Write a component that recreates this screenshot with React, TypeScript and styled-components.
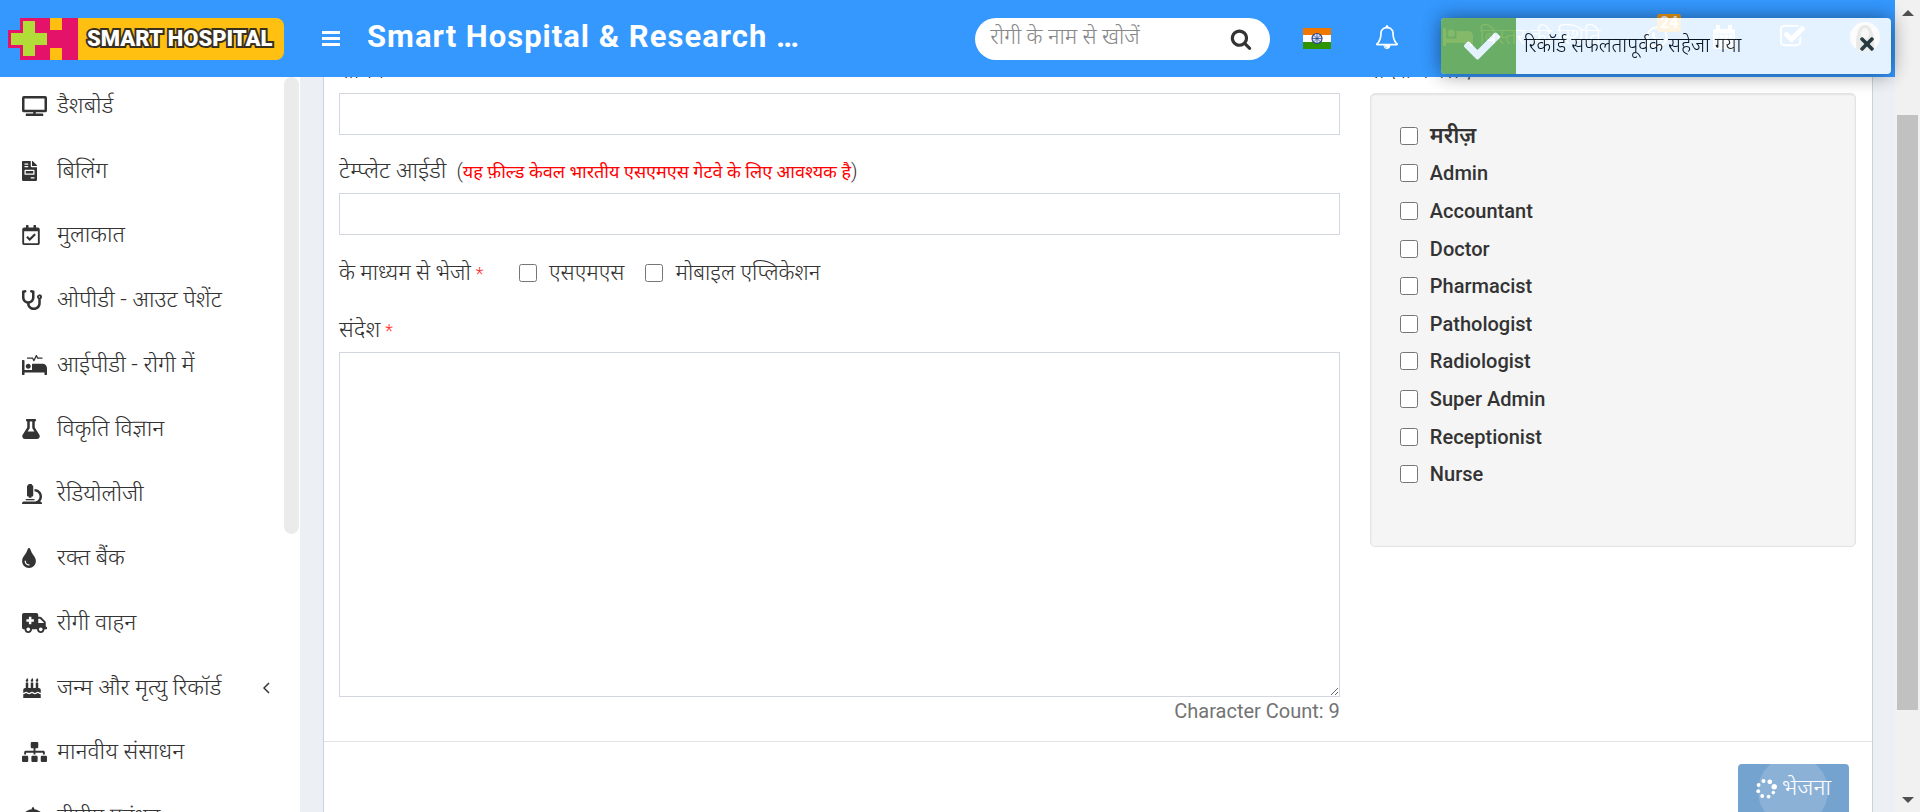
import React from "react";
import styled, { createGlobalStyle } from "styled-components";
import {
  FaTv, FaFileInvoice, FaRegCalendarCheck, FaStethoscope, FaProcedures, FaFlask, FaMicroscope,
  FaTint, FaAmbulance, FaBirthdayCake, FaSitemap, FaUmbrella, FaBed, FaWhatsapp, FaCheck, FaTimes,
} from "react-icons/fa";

const GlobalStyle = createGlobalStyle`
  *, *::before, *::after { box-sizing: border-box; }
  body {
    margin: 0;
    color: #333;
    background: #fff;
    font-family: Roboto, "Noto Sans Devanagari", "Noto Sans", sans-serif;
    font-size: 22px;
    font-weight: 300;
    line-height: 32px;
  }
  button, input, textarea { font: inherit; color: inherit; }
  button { cursor: pointer; }
`;

const Shell = styled.div`
  display: flex;
  height: 100vh;
  overflow: hidden;
`;

const Page = styled.div`
  flex: 1;
  min-width: 0;
  display: flex;
  flex-direction: column;
`;

/* Header */

const Header = styled.header`
  flex: none;
  position: relative;
  z-index: 1;
  display: flex;
  align-items: center;
  height: 77px;
  padding-right: 15px;
  background: #3498ff;
  color: #fff;
`;

const LogoLink = styled.a`
  flex: none;
  position: relative;
  width: 300px;
  height: 42px;
  padding-left: 8px;
  svg { display: block; }
`;

const LogoText = styled.span`
  position: absolute;
  left: 87px;
  top: 5px;
  font-size: 22px;
  line-height: 32px;
  font-weight: 900;
  color: #fff;
  white-space: nowrap;
  -webkit-text-stroke: 4px #3a3020;
  paint-order: stroke fill;
`;

const MenuButton = styled.button`
  display: flex;
  flex-direction: column;
  gap: 3px;
  margin-left: 22px;
  padding: 0;
  border: 0;
  background: none;
  span { width: 18px; height: 3px; background: #fff; }
`;

const Title = styled.h1`
  margin: 0 0 0 27px;
  padding-bottom: 4px;
  font-size: 31px;
  line-height: 40px;
  font-weight: 700;
  letter-spacing: 1px;
  white-space: nowrap;
`;

const SearchForm = styled.form`
  display: flex;
  align-items: center;
  width: 295px;
  height: 42px;
  margin-left: auto;
  padding: 0 18px 0 15px;
  border-radius: 21px;
  background: #fff;
  input {
    flex: 1;
    min-width: 0;
    height: 40px;
    padding: 0 0 4px;
    border: 0;
    outline: 0;
    background: none;
  }
  input::placeholder { color: #888; opacity: 1; }
  button { display: flex; padding: 0; border: 0; background: none; color: #333; }
`;

const Tools = styled.nav`
  display: flex;
  align-items: center;
  margin-left: 33px;
  a, button { display: flex; align-items: center; color: #fff; text-decoration: none; border: 0; background: none; }
  button { padding: 0; }
`;

const ToolLink = styled.a`
  position: relative;
  margin-left: 44px;
  padding-bottom: 4px;
  gap: 6px;
  white-space: nowrap;
`;

const Badge = styled.span`
  position: absolute;
  left: 12px;
  top: -11px;
  padding: 0 3px;
  border-radius: 3px;
  background: #f39c12;
  font-size: 16px;
  font-weight: 700;
  line-height: 18px;
`;

/* Body */

const Body = styled.div`
  flex: 1;
  min-height: 0;
  display: flex;
`;

const Sidebar = styled.aside`
  flex: none;
  display: flex;
  width: 300px;
  overflow: hidden;
  background: #fff;
`;

const SideNav = styled.ul`
  flex: 1;
  display: grid;
  grid-auto-rows: 1fr;
  height: 775px;
  margin: 0;
  padding: 0;
  list-style: none;
`;

const SideLink = styled.a`
  display: flex;
  align-items: center;
  height: 100%;
  padding: 0 14px 6px 22px;
  color: #333;
  font-size: 23px;
  text-decoration: none;
  white-space: nowrap;
`;

const IconSlot = styled.span<{ $width: number }>`
  flex: none;
  display: flex;
  width: 35px;
  svg { height: 20px; width: ${(p) => p.$width}px; }
`;

const SideText = styled.span`
  flex: 1;
`;

const SideThumb = styled.div`
  flex: none;
  width: 15px;
  height: 457px;
  margin-right: 1px;
  border-radius: 8px;
  background: #ebebeb;
`;

const Content = styled.main`
  flex: 1;
  min-width: 0;
  padding: 0 22px 0 23px;
  overflow: hidden;
  background: #ecf0f5;
`;

const Card = styled.form`
  margin-top: -32px;
  border: 1px solid #c5d3df;
  border-bottom: 0;
  background: #fff;
`;

const CardBody = styled.div`
  display: grid;
  grid-template-columns: 35fr 17fr;
  gap: 30px;
  padding: 9px 16px 16px 15px;
`;

const Field = styled.div`
  margin-bottom: 20px;
`;

const Label = styled.label`
  display: block;
  height: 33px;
  margin-bottom: 5px;
  font-size: 23px;
  white-space: nowrap;
`;

const Star = styled.span`
  margin-left: 5px;
  color: #f33;
  font-size: 18px;
`;

const Hint = styled.small`
  margin-left: 10px;
  font-size: 20px;
  span { color: #f00; font-size: 18px; font-weight: 400; }
`;

const TextInput = styled.input`
  display: block;
  width: 100%;
  height: 42px;
  padding: 6px 12px;
  border: 1px solid #d2d6de;
  outline: 0;
`;

const ViaRow = styled.div`
  display: flex;
  align-items: center;
  height: 39px;
  margin-bottom: 20px;
  padding-bottom: 3px;
  > span { width: 180px; }
`;

const Check = styled.label`
  display: flex;
  align-items: center;
  gap: 12px;
  margin-right: 21px;
  input { width: 18px; height: 18px; margin: 0; }
`;

const RoleCheck = styled(Check)`
  font-size: 20px;
  font-weight: 500;
  &:lang(hi) { font-size: 22px; font-weight: 600; }
`;

const Message = styled.textarea`
  display: block;
  width: 100%;
  height: 345px;
  padding: 6px 12px;
  border: 1px solid #d2d6de;
  outline: 0;
  resize: vertical;
`;

const Count = styled.p`
  margin: 0;
  text-align: right;
  font-size: 20px;
  font-weight: 400;
  line-height: 28px;
  color: #737373;
`;

const Well = styled.div`
  height: 454px;
  padding: 23px 29px;
  border: 1px solid #e3e3e3;
  border-radius: 5px;
  background: #f5f5f5;
  box-shadow: inset 0 1px 2px rgba(0, 0, 0, 0.08);
`;

const RoleList = styled.ul`
  display: grid;
  grid-auto-rows: 1fr;
  align-items: center;
  height: 376px;
  margin: 0;
  padding: 0;
  list-style: none;
`;

const CardFooter = styled.footer`
  display: flex;
  justify-content: flex-end;
  padding: 22px 23px;
  border-top: 1px solid #e3e3e3;
`;

const SendButton = styled.button`
  position: relative;
  display: flex;
  align-items: center;
  gap: 5px;
  height: 52px;
  padding: 0 18px 4px;
  overflow: hidden;
  border: 0;
  border-radius: 4px;
  background: #75a3cf;
  color: #fff;
  font-size: 23px;
  svg, span { position: relative; }
  &::before {
    content: "";
    position: absolute;
    left: 20px;
    top: -8px;
    width: 70px;
    height: 70px;
    border-radius: 50%;
    background: #8bb1d7;
  }
`;

/* Notification */

const Toast = styled.div`
  position: fixed;
  z-index: 2;
  top: 18px;
  right: 29px;
  display: flex;
  align-items: center;
  width: 450px;
  height: 56px;
  padding-right: 14px;
  border-radius: 4px;
  background: #fff;
  color: #000;
  opacity: 0.87;
  box-shadow: 0 0 20px rgba(0, 0, 0, 0.55);
  > span { flex: 1; padding-left: 8px; padding-bottom: 2px; font-size: 20px; white-space: nowrap; }
  button { display: flex; padding: 0 0 4px; border: 0; background: none; color: #1c353e; }
`;

const ToastIcon = styled.div`
  display: flex;
  align-items: center;
  justify-content: center;
  width: 75px;
  height: 100%;
  padding-left: 7px;
  border-radius: 4px 0 0 4px;
  background: #72b051;
  color: #fff;
`;

/* Page scrollbar */

const ScrollBar = styled.div`
  flex: none;
  display: flex;
  flex-direction: column;
  width: 25px;
  background: #f1f1f1;
`;

const ScrollEnd = styled.div`
  flex: none;
  display: flex;
  align-items: center;
  justify-content: center;
  height: 25px;
`;

const ScrollTrack = styled.div`
  flex: 1;
  padding: 90px 2px 0;
  &::before { content: ""; display: block; height: 595px; background: #c1c1c1; }
`;

const menu = [
  { icon: <FaTv />, width: 25, text: "डैशबोर्ड" },
  { icon: <FaFileInvoice />, width: 15, text: "बिलिंग" },
  { icon: <FaRegCalendarCheck />, width: 18, text: "मुलाकात" },
  { icon: <FaStethoscope />, width: 20, text: "ओपीडी - आउट पेशेंट" },
  { icon: <FaProcedures />, width: 25, text: "आईपीडी - रोगी में" },
  { icon: <FaFlask />, width: 18, text: "विकृति विज्ञान" },
  { icon: <FaMicroscope />, width: 20, text: "रेडियोलोजी" },
  { icon: <FaTint />, width: 14, text: "रक्त बैंक" },
  { icon: <FaAmbulance />, width: 25, text: "रोगी वाहन" },
  { icon: <FaBirthdayCake />, width: 20, text: "जन्म और मृत्यु रिकॉर्ड", more: true },
  { icon: <FaSitemap />, width: 25, text: "मानवीय संसाधन" },
  { icon: <FaUmbrella />, width: 22, text: "टीपीए प्रबंधन" },
];

const roles = ["मरीज़", "Admin", "Accountant", "Doctor", "Pharmacist", "Pathologist", "Radiologist", "Super Admin", "Receptionist", "Nurse"];

const LogoMark = () => (
  <svg width="276" height="42" viewBox="0 0 276 42" aria-hidden="true">
    <path d="M42 0H268a8 8 0 0 1 8 8V34a8 8 0 0 1-8 8H42Z" fill="#ffc012" />
    <path d="M12 0H42V12H54V0H70V42H54V30H42V42H12V30H0V12H12Z" fill="#e5126a" />
    <path d="M15 3H27V15H39V27H27V38H15V27H3V15H15Z" fill="#b2dd38" />
  </svg>
);

const SearchIcon = () => (
  <svg width="22" height="22" viewBox="0 0 1792 1792" fill="currentColor" aria-hidden="true">
    <path d="M1216 832q0-185-131.500-316.500t-316.500-131.500-316.500 131.500-131.500 316.500 131.500 316.500 316.500 131.500 316.500-131.500 131.500-316.500zm512 832q0 52-38 90t-90 38q-54 0-90-38l-343-342q-179 124-399 124-143 0-273.500-55.500t-225-150-150-225-55.500-273.500 55.500-273.500 150-225 225-150 273.500-55.500 273.500 55.500 225 150 150 225 55.500 273.500q0 220-124 399l343 343q37 37 37 90z" />
  </svg>
);

const FlagIcon = () => (
  <svg width="28" height="21" viewBox="0 0 28 21" aria-hidden="true">
    <path d="M0 0H28V7H0Z" fill="#f07800" />
    <path d="M0 7H28V14H0Z" fill="#fff" />
    <path d="M0 14H28V21H0Z" fill="#2f9400" />
    <circle cx="14" cy="10.500" r="5" fill="#dfe6f5" stroke="#2a4690" strokeWidth="1.200" />
    <path d="M14 6V15M9 10.500H19M11 7.500L17 13.500M17 7.500L11 13.500" stroke="#2a4690" strokeWidth="0.800" />
  </svg>
);

const BellIcon = () => (
  <svg width="24" height="24" viewBox="0 0 1792 1792" fill="currentColor" aria-hidden="true">
    <path d="M912 1696q0-16-16-16-59 0-101.500-42.500t-42.500-101.500q0-16-16-16t-16 16q0 73 51.500 124.500t124.500 51.500q16 0 16-16zM246 1408h1300q-266-300-266-832 0-51-24-105t-69-103-121.500-80.500-169.500-31.500-169.500 31.500-121.500 80.500-69 103-24 105q0 532-266 832zM1728 1408q0 52-38 90t-90 38h-448q0 106-75 181t-181 75-181-75-75-181h-448q-52 0-90-38t-38-90q50-42 91-88t85-119.500 74.500-158.500 50-206 19.500-260q0-152 117-282.500t307-158.500q-8-19-8-39 0-40 28-68t68-28 68 28 28 68q0 20-8 39 190 28 307 158.500t117 282.500q0 139 19.500 260t50 206 74.500 158.500 85 119.500 91 88z" />
  </svg>
);

const CalendarIcon = () => (
  <svg width="22" height="24" viewBox="0 0 22 24" aria-hidden="true">
    <path d="M2 4H20A2 2 0 0 1 22 6V22A2 2 0 0 1 20 24H2A2 2 0 0 1 0 22V6A2 2 0 0 1 2 4Z" fill="#fff" />
    <path d="M5 1V7M17 1V7" stroke="#fff" strokeWidth="4" strokeLinecap="round" />
    <path d="M2 9H20M2 13.500H20M2 18H20M2 22H20M2 9V22M6.500 9V22M11 9V22M15.500 9V22M20 9V22" stroke="#3498ff" strokeWidth="1" opacity="0.700" />
  </svg>
);

const CheckSquareIcon = () => (
  <svg width="27" height="27" viewBox="0 0 1792 1792" fill="currentColor" aria-hidden="true">
    <path d="M1472 930v318q0 119-84.500 203.500t-203.500 84.500h-832q-119 0-203.500-84.500t-84.500-203.500v-832q0-119 84.500-203.500t203.500-84.500h832q63 0 117 25 15 7 18 23 3 17-9 29l-49 49q-10 10-23 10-3 0-9-2-23-6-45-6h-832q-66 0-113 47t-47 113v832q0 66 47 113t113 47h832q66 0 113-47t47-113v-254q0-13 9-22l64-64q10-10 23-10 6 0 12 3 20 8 20 29zm231-489l-814 814q-24 24-57 24t-57-24l-430-430q-24-24-24-57t24-57l110-110q24-24 57-24t57 24l263 263 647-647q24-24 57-24t57 24l110 110q24 24 24 57t-24 57z" />
  </svg>
);

const Avatar = () => (
  <svg width="30" height="30" viewBox="0 0 30 30" aria-hidden="true">
    <defs><clipPath id="face"><circle cx="15" cy="15" r="15" /></clipPath></defs>
    <g clipPath="url(#face)">
      <path d="M0 0H30V30H0Z" fill="#e9e6e4" />
      <path d="M7 30C5 20 6 3 15 3S25 20 24 30Z" fill="#5a5350" />
      <ellipse cx="15" cy="12" rx="4" ry="6" fill="#d9c4b8" />
      <path d="M8 30C9 22 21 22 22 30Z" fill="#8f8480" />
    </g>
  </svg>
);

const ChevronIcon = () => (
  <svg width="7" height="12" viewBox="0 0 7 12" aria-hidden="true">
    <path d="M6 1L1 6L6 11" fill="none" stroke="#333" strokeWidth="1.500" />
  </svg>
);

const SpinnerIcon = () => (
  <svg width="21" height="21" viewBox="0 0 21 21" fill="#fff" aria-hidden="true">
    <circle cx="18.200" cy="8.800" r="2.700" />
    <circle cx="13.800" cy="3.800" r="2.400" />
    <circle cx="7.500" cy="3" r="2" />
    <circle cx="2.600" cy="7" r="1.900" />
    <circle cx="2.200" cy="13.200" r="1.900" />
    <circle cx="6.200" cy="18" r="1.900" />
    <circle cx="12.600" cy="18.600" r="1.900" />
    <circle cx="17.300" cy="14.600" r="1.800" />
  </svg>
);

const Arrow = ({ down }: { down?: boolean }) => (
  <svg width="12" height="6" viewBox="0 0 12 6" aria-hidden="true">
    <path d={down ? "M0 0H12L6 6Z" : "M0 6H12L6 0Z"} fill="#505050" />
  </svg>
);

export default function App() {
  return (
    <>
      <GlobalStyle />
      <Shell>
        <Page>
          <Header>
            <LogoLink href="#">
              <LogoMark />
              <LogoText>SMART HOSPITAL</LogoText>
            </LogoLink>
            <MenuButton type="button" aria-label="Menu"><span /><span /><span /></MenuButton>
            <Title>Smart Hospital &amp; Research …</Title>
            <SearchForm>
              <input type="text" placeholder="रोगी के नाम से खोजें" aria-label="रोगी के नाम से खोजें" />
              <button type="submit" aria-label="Search"><SearchIcon /></button>
            </SearchForm>
            <Tools>
              <button type="button" aria-label="Language"><FlagIcon /></button>
              <ToolLink href="#" aria-label="Notifications"><BellIcon /></ToolLink>
              <ToolLink href="#"><FaBed size={30} /> बिस्तर की स्थिति</ToolLink>
              <ToolLink href="#" aria-label="Chat"><FaWhatsapp size={24} /><Badge>24</Badge></ToolLink>
              <ToolLink href="#" aria-label="Calendar"><CalendarIcon /></ToolLink>
              <ToolLink href="#" aria-label="Tasks"><CheckSquareIcon /></ToolLink>
              <ToolLink href="#" aria-label="Profile"><Avatar /></ToolLink>
            </Tools>
          </Header>
          <Body>
            <Sidebar>
              <SideNav>
                {menu.map((m) => (
                  <li key={m.text}>
                    <SideLink href="#">
                      <IconSlot $width={m.width}>{m.icon}</IconSlot>
                      <SideText>{m.text}</SideText>
                      {m.more && <ChevronIcon />}
                    </SideLink>
                  </li>
                ))}
              </SideNav>
              <SideThumb />
            </Sidebar>
            <Content>
              <Card>
                <CardBody>
                  <div>
                    <Field>
                      <Label htmlFor="title">शीर्षक</Label>
                      <TextInput id="title" type="text" />
                    </Field>
                    <Field>
                      <Label htmlFor="template">
                        टेम्प्लेट आईडी
                        <Hint>(<span>यह फ़ील्ड केवल भारतीय एसएमएस गेटवे के लिए आवश्यक है</span>)</Hint>
                      </Label>
                      <TextInput id="template" type="text" />
                    </Field>
                    <ViaRow>
                      <span>के माध्यम से भेजो<Star>*</Star></span>
                      <Check><input type="checkbox" />एसएमएस</Check>
                      <Check><input type="checkbox" />मोबाइल एप्लिकेशन</Check>
                    </ViaRow>
                    <Label htmlFor="message">संदेश<Star>*</Star></Label>
                    <Message id="message" />
                    <Count>Character Count: 9</Count>
                  </div>
                  <div>
                    <Label as="div">संदेश के लिए</Label>
                    <Well>
                      <RoleList>
                        {roles.map((r, i) => (
                          <li key={r}><RoleCheck lang={i === 0 ? "hi" : "en"}><input type="checkbox" />{r}</RoleCheck></li>
                        ))}
                      </RoleList>
                    </Well>
                  </div>
                </CardBody>
                <CardFooter>
                  <SendButton type="button"><SpinnerIcon /><span>भेजना</span></SendButton>
                </CardFooter>
              </Card>
            </Content>
          </Body>
        </Page>
        <ScrollBar aria-hidden="true">
          <ScrollEnd><Arrow /></ScrollEnd>
          <ScrollTrack />
          <ScrollEnd><Arrow down /></ScrollEnd>
        </ScrollBar>
      </Shell>
      <Toast role="status">
        <ToastIcon><FaCheck size={36} /></ToastIcon>
        <span>रिकॉर्ड सफलतापूर्वक सहेजा गया</span>
        <button type="button" aria-label="Close"><FaTimes size={20} /></button>
      </Toast>
    </>
  );
}
